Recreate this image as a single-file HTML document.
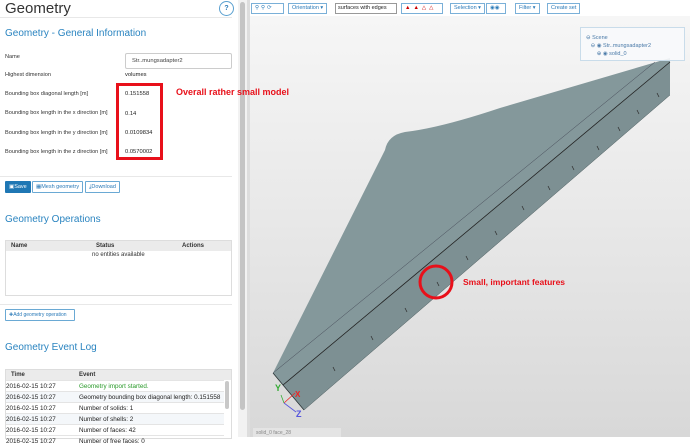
<!DOCTYPE html>
<html><head><style>
*{box-sizing:border-box;margin:0;padding:0}
body{width:690px;height:437px;overflow:hidden;font-family:"Liberation Sans",sans-serif;background:#fff;position:relative}
.a{position:absolute;white-space:nowrap}
.lbl{font-size:5.6px;color:#333;left:5px}
.val{font-size:5.8px;color:#222;left:125px}
.h2{color:#2a84c0;font-size:10px;left:5px}
.btn{border:1px solid #6aa9d4;color:#2a7ab8;font-size:5.5px;height:12px;line-height:10px;padding:0 3px;background:#fff;border-radius:1px}
.tb{border:1px solid #7ab0d8;color:#2a7ab8;font-size:5.5px;height:11px;line-height:9px;padding:0 3px;background:#fff;top:3px;overflow:hidden}
.row{position:absolute;left:6px;width:218px;height:11px;font-size:6.3px;color:#222;line-height:11px;border-top:1px solid #e4e4e4;white-space:nowrap}
.row span{position:absolute;left:73px}
</style></head><body>
<!-- left panel -->
<div class="a" style="left:5px;top:0;font-size:15px;color:#333">Geometry</div>
<div class="a" style="left:219px;top:1px;width:15px;height:15px;border:1px solid #5aa0d0;border-radius:50%;font-size:7px;color:#2a7ab8;text-align:center;line-height:13px;font-weight:bold">?</div>
<div class="a" style="left:0;top:17px;width:232px;border-top:1px solid #e8e8e8"></div>
<div class="a h2" style="top:28px">Geometry - General Information</div>
<div class="a lbl" style="top:54px">Name</div>
<div class="a" style="left:125px;top:53px;width:107px;height:16px;border:1px solid #ccc;border-radius:2px;font-size:5.8px;color:#444;padding:4px 6px">Str..mungsadapter2</div>
<div class="a lbl" style="top:72px">Highest dimension</div>
<div class="a val" style="top:72px">volumes</div>
<div class="a lbl" style="top:91px">Bounding box diagonal length [m]</div>
<div class="a val" style="top:91px">0.151558</div>
<div class="a lbl" style="top:110px">Bounding box length in the x direction [m]</div>
<div class="a val" style="top:111px">0.14</div>
<div class="a lbl" style="top:130px">Bounding box length in the y direction [m]</div>
<div class="a val" style="top:130px">0.0109834</div>
<div class="a lbl" style="top:149px">Bounding box length in the z direction [m]</div>
<div class="a val" style="top:149px">0.0570002</div>
<div class="a" style="left:116px;top:83px;width:47px;height:77px;border:3px solid #e8101a"></div>
<div class="a" style="left:0;top:176px;width:232px;border-top:1px solid #e8e8e8"></div>
<div class="a btn" style="left:5px;top:181px;background:#1f77b4;color:#fff;border-color:#1f77b4">▣Save</div>
<div class="a btn" style="left:32px;top:181px">▦Mesh geometry</div>
<div class="a btn" style="left:85px;top:181px">⤓Download</div>
<div class="a h2" style="top:214px">Geometry Operations</div>
<div class="a" style="left:5px;top:240px;width:227px;height:56px;border:1px solid #ddd"></div>
<div class="a" style="left:6px;top:241px;width:225px;height:10px;background:#ebebeb;font-size:6px;font-weight:bold;color:#333;line-height:10px">
<span class="a" style="left:5px">Name</span><span class="a" style="left:90px">Status</span><span class="a" style="left:176px">Actions</span></div>
<div class="a" style="left:92px;top:252px;font-size:6px;color:#333">no entities available</div>
<div class="a" style="left:0;top:304px;width:232px;border-top:1px solid #e8e8e8"></div>
<div class="a btn" style="left:5px;top:309px;width:70px;height:12px;font-size:5px;line-height:10px">✚Add geometry operation</div>
<div class="a h2" style="top:342px">Geometry Event Log</div>
<div class="a" style="left:5px;top:369px;width:227px;height:70px;border:1px solid #ddd"></div>
<div class="a" style="left:6px;top:370px;width:225px;height:10px;background:#ebebeb;font-size:6px;font-weight:bold;color:#333;line-height:10px">
<span class="a" style="left:5px">Time</span><span class="a" style="left:73px">Event</span></div>
<div class="row" style="top:380px">2016-02-15 10:27<span style="color:#2a9a2a">Geometry import started.</span></div>
<div class="row" style="top:391px;background:#f4f7fa">2016-02-15 10:27<span>Geometry bounding box diagonal length: 0.151558</span></div>
<div class="row" style="top:402px">2016-02-15 10:27<span>Number of solids: 1</span></div>
<div class="row" style="top:413px;background:#f4f7fa">2016-02-15 10:27<span>Number of shells: 2</span></div>
<div class="row" style="top:424px">2016-02-15 10:27<span>Number of faces: 42</span></div>
<div class="row" style="top:435px">2016-02-15 10:27<span>Number of free faces: 0</span></div>
<div class="a" style="left:225px;top:381px;width:4px;height:28px;background:#c8c8c8;border-radius:2px"></div>
<!-- scrollbar/divider -->
<div class="a" style="left:238px;top:0;width:9px;height:437px;background:#f2f2f2"></div>
<div class="a" style="left:240px;top:2px;width:5px;height:408px;background:#c4c4c4;border-radius:3px"></div>
<div class="a" style="left:247px;top:0;width:3px;height:437px;background:#ddd"></div>
<!-- viewer -->
<div class="a" style="left:250px;top:16px;width:440px;height:421px;background:linear-gradient(#f6f6f6,#e6e6e6 55%,#d8d8d8)"></div>
<div class="a" style="left:250px;top:0;width:440px;height:16px;background:#fff"></div>
<div class="a tb" style="left:251px;width:33px;letter-spacing:2px">⚲⚲⟳</div>
<div class="a tb" style="left:288px">Orientation ▾</div>
<div class="a tb" style="left:335px;width:62px;border-color:#999;color:#222;padding:0 2px">surfaces with edges</div>
<div class="a tb" style="left:401px;width:42px;color:#c00;letter-spacing:3px">▲▲△△</div>
<div class="a tb" style="left:450px">Selection ▾</div>
<div class="a tb" style="left:486px;width:20px">◉◉</div>
<div class="a tb" style="left:515px">Filter ▾</div>
<div class="a tb" style="left:547px">Create set</div>
<svg class="a" style="left:0;top:0" width="690" height="437">
<path d="M273,373 L385,150 Q388,135 405,132 Q440,128 500,108 L670,58 L670,62 L283,385 Z" fill="#84989b"/>
<path d="M283,385 L670,62 L670,95 L304,410 Z" fill="#7d9093"/>
<path d="M273,373 L283,385 L304,410" fill="none" stroke="#2a3436" stroke-width="0.8"/>
<path d="M273,373 L655,62" stroke="#334" stroke-width="0.4"/>
<path d="M283,385 L670,62" stroke="#222" stroke-width="0.8"/>
<path d="M304,410 L670,95" stroke="#4a5a5c" stroke-width="0.5"/>
<g stroke="#333" stroke-width="0.8" fill="none">
<path d="M333,367 l2,4"/><path d="M371,336 l2,4"/><path d="M405,308 l2,4"/><path d="M437,282 l2,4"/><path d="M466,256 l2,4"/><path d="M495,231 l2,4"/><path d="M522,206 l2,4"/><path d="M548,186 l2,4"/><path d="M572,166 l2,4"/><path d="M597,146 l2,4"/><path d="M618,127 l2,4"/><path d="M637,110 l2,4"/><path d="M657,93 l2,4"/>
</g>
<circle cx="436" cy="282" r="16" fill="none" stroke="#e8101a" stroke-width="3"/>
<text x="463" y="285" font-family="Liberation Sans" font-size="8.5" font-weight="bold" fill="#e8101a">Small, important features</text>
<text x="176" y="95" font-family="Liberation Sans" font-size="9" font-weight="bold" fill="#e8101a">Overall rather small model</text>
<line x1="284" y1="403" x2="295" y2="393" stroke="#e22" stroke-width="0.8"/>
<line x1="284" y1="403" x2="281" y2="395" stroke="#3a3" stroke-width="0.8"/>
<line x1="284" y1="403" x2="296" y2="412" stroke="#55d" stroke-width="0.8"/>
<text x="275" y="391" font-family="Liberation Sans" font-size="9" font-weight="bold" fill="#3a3">Y</text>
<text x="295" y="397" font-family="Liberation Sans" font-size="8" font-weight="bold" fill="#e22">X</text>
<text x="296" y="417" font-family="Liberation Sans" font-size="9" font-weight="bold" fill="#55d">Z</text>
</svg>
<div class="a" style="left:580px;top:27px;width:105px;height:34px;background:rgba(248,250,252,0.9);border:1px solid #c9dcea;font-size:5.5px;color:#4a7aa8;line-height:8px;padding:6px 0 0 5px">
⊖ Scene<br>&nbsp;&nbsp;&nbsp;⊖ ◉ Str..mungsadapter2<br>&nbsp;&nbsp;&nbsp;&nbsp;&nbsp;&nbsp;&nbsp;⊕ ◉ solid_0</div>
<div class="a" style="left:253px;top:428px;width:88px;height:9px;background:#e4e4e4;font-size:5px;color:#888;padding:2px 3px">solid_0 face_28</div>
</body></html>
